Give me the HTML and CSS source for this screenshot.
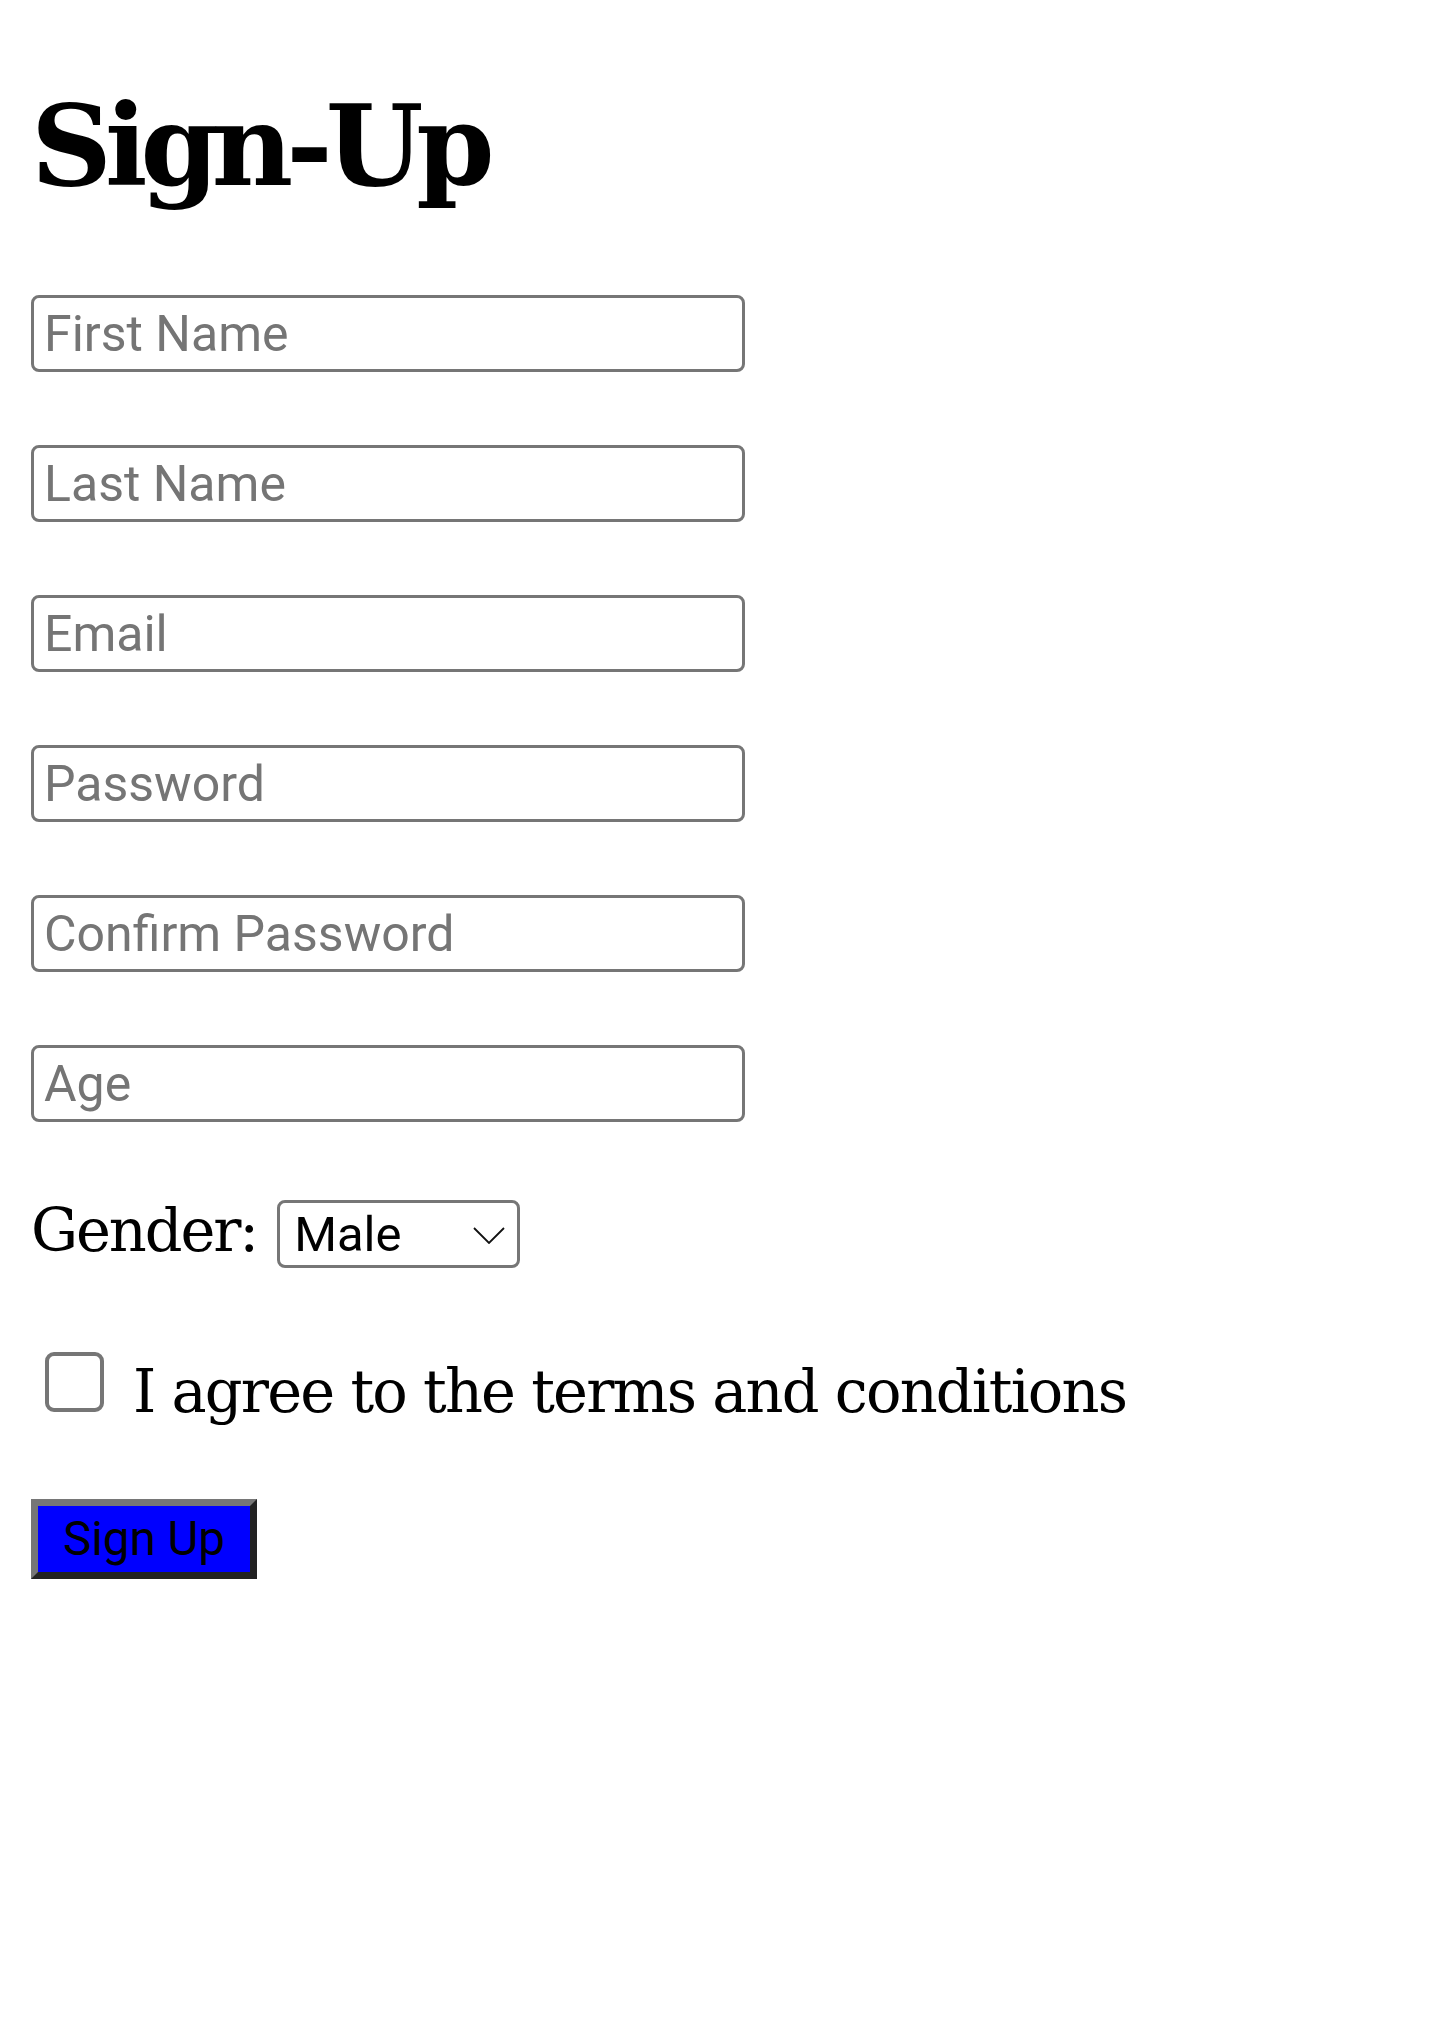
FILE: index.html
```html
<!DOCTYPE html>
<html lang="en">
<head>
<meta charset="utf-8">
<title>Sign-Up</title>
<link rel="stylesheet" href="styles.css">
</head>
<body>
<h1 class="title">Sign-Up</h1>
<form class="signup">
  <input class="field" type="text" placeholder="First Name">
  <input class="field" type="text" placeholder="Last Name">
  <input class="field" type="email" placeholder="Email">
  <input class="field" type="password" placeholder="Password">
  <input class="field" type="password" placeholder="Confirm Password">
  <input class="field" type="number" placeholder="Age">
  <div class="gender-row">
    <label class="gender-label" for="gender">Gender:</label>
    <div class="select-wrap">
      <select id="gender" class="select">
        <option>Male</option>
        <option>Female</option>
        <option>Other</option>
      </select>
      <svg class="chevron" width="32" height="17" viewBox="0 0 32 17" aria-hidden="true">
        <path d="M1 1 L16 16 L31 1" fill="none" stroke="#111" stroke-width="1.8"/>
      </svg>
    </div>
  </div>
  <div class="terms-row">
    <input type="checkbox" class="check" id="terms">
    <label for="terms" class="terms-label">I agree to the terms and conditions</label>
  </div>
  <button class="submit" type="submit">Sign Up</button>
</form>
</body>
</html>
```

FILE: styles.css
```css
html, body {
  margin: 0;
  padding: 0;
  background: #ffffff;
}
body {
  padding: 0 31px;
  font-family: "DejaVu Serif", "Liberation Serif", serif;
  color: #000;
}
.title {
  margin: 74px 0 0;
  font-size: 112px;
  line-height: 144px;
  font-weight: 700;
  letter-spacing: -7px;
}
.signup {
  margin-top: 77px;
  display: flex;
  flex-direction: column;
  align-items: flex-start;
}
.field {
  display: block;
  box-sizing: border-box;
  width: 714px;
  height: 77px;
  margin: 0;
  padding: 0 0 0 10px;
  border: 3px solid #767676;
  border-radius: 8px;
  font-family: Roboto, "Noto Sans", sans-serif;
  font-size: 50px;
  color: #000;
  background: #fff;
  outline: none;
}
.field + .field {
  margin-top: 73px;
}
.field::placeholder {
  color: #757575;
  opacity: 1;
}
.field::-webkit-outer-spin-button,
.field::-webkit-inner-spin-button {
  -webkit-appearance: none;
  margin: 0;
}
.gender-row {
  margin-top: 78px;
  display: flex;
  align-items: flex-start;
}
.gender-label {
  font-size: 59px;
  line-height: 61px;
  margin-right: 20px;
  letter-spacing: -2.1px;
}
.select-wrap {
  position: relative;
}
.select {
  -webkit-appearance: none;
  appearance: none;
  box-sizing: border-box;
  width: 243px;
  height: 68px;
  margin: 0;
  padding: 0 0 0 14px;
  border: 3px solid #767676;
  border-radius: 8px;
  background: #fff;
  font-family: Roboto, "Noto Sans", sans-serif;
  font-size: 49px;
  color: #000;
}
.chevron {
  position: absolute;
  right: 15px;
  top: 27px;
  pointer-events: none;
}
.terms-row {
  margin-top: 84px;
  display: flex;
  align-items: flex-start;
}
.check {
  -webkit-appearance: none;
  appearance: none;
  box-sizing: border-box;
  width: 59px;
  height: 60px;
  margin: 0 0 0 14px;
  border: 4px solid #767676;
  border-radius: 9px;
  background: #fff;
}
.terms-label {
  margin-left: 29px;
  font-size: 59px;
  line-height: 79px;
  letter-spacing: -1.8px;
}
.submit {
  margin-top: 68px;
  box-sizing: border-box;
  width: 226px;
  height: 80px;
  padding: 0;
  border-style: solid;
  border-width: 7px;
  border-color: #767676 #222222 #222222 #767676;
  background: #0000ff;
  color: #000;
  font-family: Roboto, "Noto Sans", sans-serif;
  font-size: 47.5px;
  text-align: center;
}
```
